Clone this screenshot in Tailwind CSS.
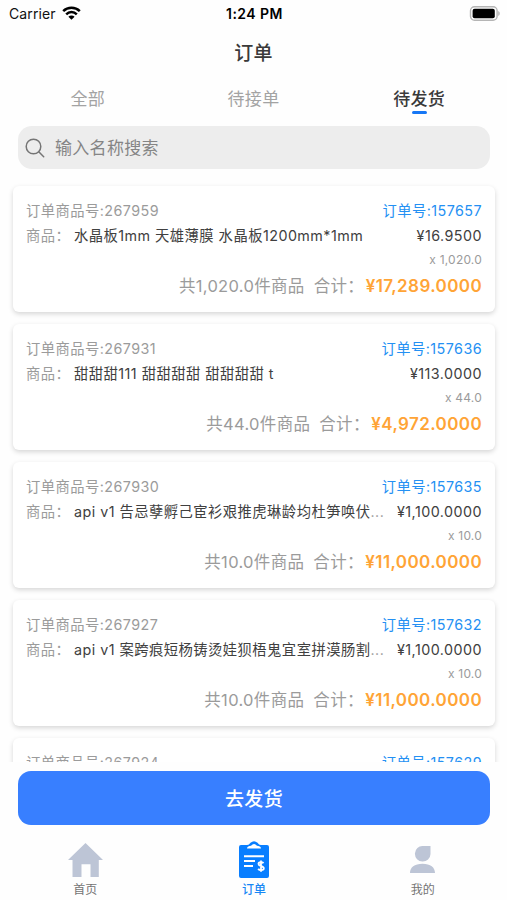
<!DOCTYPE html>
<html lang="zh-CN">
<head>
<meta charset="utf-8">
<title>订单</title>
<script src="https://cdn.jsdelivr.net/npm/@tailwindcss/browser@4"></script>
</head>
<body class="bg-[#fefefe]">
<div class="w-[507px] h-[900px] overflow-hidden flex flex-col bg-[#fefefe] font-['Inter','Noto_Sans_CJK_SC',sans-serif] whitespace-nowrap">
  <header class="h-7 shrink-0 grid grid-cols-3 items-center pl-[9px] pr-[7px] text-[#111]">
    <div class="flex items-center gap-[6px] text-[14px] leading-7 tracking-[0.1px]">
      <span>Carrier</span>
      <svg class="w-[19px] h-[14px] -mt-[2px]" viewBox="0 0 19 14" fill="none" stroke="#000" stroke-width="2.5"><path d="M1.2 5.2a11.8 11.8 0 0 1 16.6 0M4.2 8.3a7.5 7.5 0 0 1 10.6 0"/><path d="M9.5 13.8 6.4 10.7a4.4 4.4 0 0 1 6.2 0z" fill="#000" stroke="none"/></svg>
    </div>
    <div class="text-center text-[14px] leading-7 font-semibold tracking-[0.45px] text-black">1:24 PM</div>
    <svg class="justify-self-end -mt-[2px] w-[31px] h-[15px]" viewBox="0 0 31 15"><rect x="1.500" y=".7" width="26.6" height="13.6" rx="4" fill="#fff" stroke="#b5b5b5" stroke-width="1.4"/><rect x="3.600" y="2.700" width="22.200" height="9.600" rx="2" fill="#000"/><path d="M29.300 5c1.800 .8 1.800 4.200 0 5z" fill="#aaa"/></svg>
  </header>
  <h1 class="h-[50px] shrink-0 text-center text-[19px] leading-[52px] tracking-[0.3px] font-medium text-[#3a3a3a]">订单</h1>
  <nav class="h-12 shrink-0 px-[5px] grid grid-cols-3 text-center text-[17px] leading-[42px] tracking-[0.3px] text-[#a3a3a3]">
    <div>全部</div>
    <div>待接单</div>
    <div class="flex flex-col items-center text-[#3a3a3a] font-medium"><span class="h-[33px]">待发货</span><span class="w-[15px] h-[3px] rounded-full bg-[#1677f5]"></span></div>
  </nav>
  <div class="ml-[18px] mr-[17px] h-[43px] shrink-0 rounded-[14px] bg-[#ededed] flex items-center pl-[7px] gap-[10px] text-[17px] tracking-[0.3px] text-[#858585]">
    <svg class="w-5 h-5" viewBox="0 0 20 20" fill="none" stroke="#757575" stroke-width="1.5" stroke-linecap="round"><circle cx="8.500" cy="8.500" r="7.300"/><path d="m14 14 4.700 4.700"/></svg>
    <span class="leading-[43px] pt-[2px]">输入名称搜索</span>
  </div>
  <main id="orders" class="mt-[9px] h-[584px] shrink-0 overflow-hidden pl-[13px] pt-[8px] pr-3 flex flex-col gap-3"></main>
  <div class="pl-[18px] pr-[17px] pt-[9px] shrink-0">
    <button class="block w-full h-[54px] rounded-[13px] bg-[#387fff] text-center text-[19px] tracking-[0.3px] leading-[58px] font-medium text-white">去发货</button>
  </div>
  <footer class="h-[75px] shrink-0 grid grid-cols-3 pl-px text-center text-[12px] leading-4 text-[#747474]">
    <div class="flex flex-col items-center pt-[18px]">
      <svg class="w-[35px] h-[34px]" viewBox="0 0 35 35" preserveAspectRatio="none" fill="#bdc5d6"><path d="M17.500 0 35 17.500h-4.200V35h-8.300V22h-9v13H4.500V17.500H0z"/></svg>
      <span class="mt-[5px]">首页</span>
    </div>
    <div class="flex flex-col items-center pt-[16px] text-[#1787f5] font-medium">
      <svg class="w-[30px] h-[37px]" viewBox="0 0 30 37"><path d="M2 4h6c2 0 2-1 3.500-2.300Q15-1.300 18.500 1.700C20 3 20 4 22 4h6q2 0 2 2v29q0 2-2 2H2q-2 0-2-2V6q0-2 2-2z" fill="#087eff"/><path d="M8 7.500c0-2 2-2.500 4-2.700Q15 1 18 4.800c2 .2 4 .7 4 2.700z" fill="#fff"/><path d="M5 15.300h20M5 20h11M5 25h9" stroke="#fff" stroke-width="2"/><path d="M24.500 22.300c-1-1.500-5-1.500-5 .7 0 2.500 5.300 1.600 5.300 4.200 0 2.500-4.500 2.500-5.600.5M22 19.500v11.300" fill="none" stroke="#fff" stroke-width="1.800"/></svg>
      <span class="mt-[4px]">订单</span>
    </div>
    <div class="flex flex-col items-center pt-[21px]">
      <svg class="w-[25px] h-[27px]" viewBox="0 0 25 27" fill="#bdc5d6"><path d="M13 0h7.500v8A7.800 7.800 0 1 1 13 0zM0 27c0-5.500 4.500-9.200 12.500-9.200S25 21.500 25 27z"/></svg>
      <span class="mt-[9px]">我的</span>
    </div>
  </footer>
</div>
<script>
const orders = [
  ['267959', '157657', '水晶板1mm 天雄薄膜 水晶板1200mm*1mm', '', '16.9500', '1,020.0', '17,289.0000'],
  ['267931', '157636', '甜甜甜111 甜甜甜甜 甜甜甜甜 t', '', '113.0000', '44.0', '4,972.0000'],
  ['267930', '157635', 'api v1 告忌孽孵己宦衫艰推虎琳龄均杜笋唤伏', '...', '1,100.0000', '10.0', '11,000.0000'],
  ['267927', '157632', 'api v1 案跨痕短杨铸烫娃狈梧鬼宜室拼漠肠割', '...', '1,100.0000', '10.0', '11,000.0000'],
  ['267924', '157629'],
];
document.getElementById('orders').innerHTML = orders.map(([item, no, name, more, price, qty, total]) => `
  <article class="h-[126px] shrink-0 rounded-[6px] bg-white shadow-[0_2px_5px_rgba(0,0,0,0.16)] pl-[13px] pr-[13px] pt-[13px] text-[14.300px] text-[#9b9b9b]">
    <div class="flex justify-between h-6 leading-6 tracking-[0.45px]"><span>订单商品号:${item}</span><span class="text-[#2490f3]">订单号:${no}</span></div>
    ${name ? `<div class="flex h-[25px] leading-[26px] tracking-[0.47px]"><span class="w-[48px]">商品：</span><span class="text-[#404040]">${name}<span class="text-[#999]">${more}</span></span><span class="ml-auto text-[#404040]">¥${price}</span></div>
    <div class="h-[23px] leading-[23px] text-right text-[12px] tracking-[0.2px]">x ${qty}</div>
    <div class="h-7 leading-[30px] flex justify-end text-[16.500px] tracking-[0.32px]"><span>共${qty}件商品</span><span class="ml-[9px] w-[52px]">合计：</span><span class="font-semibold text-[17px] tracking-[0.4px] text-[#ffa436]">¥${total}</span></div>` : ''}
  </article>`).join('');
</script>
</body>
</html>
